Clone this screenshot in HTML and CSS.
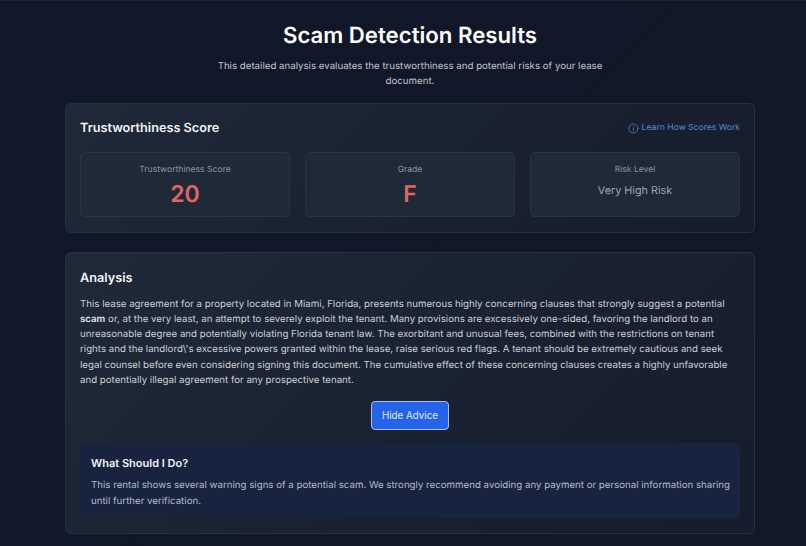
FILE: index.html
```html
<!DOCTYPE html>
<html lang="en">
<head>
    <meta charset="UTF-8">
    <meta name="viewport" content="width=device-width, initial-scale=1.0">
    <title>Scam Detection Results</title>
    <link rel="stylesheet" href="styles.css">
</head>
<body>

<div class="page">
    <div class="page-header">
        <h1 class="title">Scam Detection Results</h1>
        <p class="subtitle">This detailed analysis evaluates the trustworthiness and potential risks of your lease document.</p>
    </div>

    <!-- Score summary -->
    <section class="card score-card">
        <div class="card-head">
            <h2 class="card-title">Trustworthiness Score</h2>
            <a class="learn-link" href="#">
                <svg class="info-icon" viewBox="0 0 24 24" fill="none" stroke="currentColor" stroke-width="1.6" stroke-linecap="round">
                    <circle cx="12" cy="12" r="10"></circle>
                    <path d="M12 11v6"></path>
                    <path d="M12 7.5v.2"></path>
                </svg>
                Learn How Scores Work
            </a>
        </div>
        <div class="stats">
            <div class="stat">
                <div class="stat-label">Trustworthiness Score</div>
                <div class="stat-value">20</div>
            </div>
            <div class="stat">
                <div class="stat-label">Grade</div>
                <div class="stat-value">F</div>
            </div>
            <div class="stat">
                <div class="stat-label">Risk Level</div>
                <div class="stat-text">Very High Risk</div>
            </div>
        </div>
    </section>

    <!-- Analysis -->
    <section class="card analysis-card">
        <h2 class="card-title">Analysis</h2>
        <p class="analysis-text">This lease agreement for a property located in Miami, Florida, presents numerous highly concerning clauses that strongly suggest a potential <strong>scam</strong> or, at the very least, an attempt to severely exploit the tenant. Many provisions are excessively one-sided, favoring the landlord to an unreasonable degree and potentially violating Florida tenant law. The exorbitant and unusual fees, combined with the restrictions on tenant rights and the landlord\'s excessive powers granted within the lease, raise serious red flags. A tenant should be extremely cautious and seek legal counsel before even considering signing this document. The cumulative effect of these concerning clauses creates a highly unfavorable and potentially illegal agreement for any prospective tenant.</p>
        <div class="advice-row">
            <button class="advice-button">Hide Advice</button>
        </div>
        <div class="advice-box">
            <h3 class="advice-title">What Should I Do?</h3>
            <p class="advice-text">This rental shows several warning signs of a potential scam. We strongly recommend avoiding any payment or personal information sharing until further verification.</p>
        </div>
    </section>
</div>

</body>
</html>
```

FILE: styles.css
```css
html, body {
    margin: 0;
    padding: 0;
    height: 100%;
}

body {
    font-family: Inter, "Liberation Sans", sans-serif;
    text-rendering: geometricPrecision;
    background: linear-gradient(135deg, #0f1729 0%, #111827 100%);
    border-top: 1px solid #1c2434;
    box-sizing: border-box;
    overflow: hidden;
}

.page {
    width: 690px;
    margin-left: 65px;
    padding-top: 20px;
}

.page-header {
    text-align: center;
    margin-bottom: 13px;
}

.title {
    margin: 0 0 9px;
    color: #fff;
    font-size: 22.2px;
    line-height: 29px;
    font-weight: 600;
}

.subtitle {
    width: 420px;
    margin: 0 auto;
    color: #c0c4cc;
    font-size: 9.7px;
    line-height: 15.3px;
}

.card {
    box-sizing: border-box;
    padding: 15px 14px;
    border: 1px solid #273040;
    border-radius: 6px;
    background: linear-gradient(135deg, #1f2937 0%, #151c2c 100%);
}

.score-card {
    height: 130px;
    margin-bottom: 19px;
}

.card-head {
    display: flex;
    justify-content: space-between;
    align-items: center;
    margin-bottom: 14px;
}

.card-title {
    margin: 0;
    color: #f3f4f6;
    font-size: 12.7px;
    line-height: 19px;
    font-weight: 600;
}

.learn-link {
    display: flex;
    align-items: center;
    gap: 3px;
    color: #5b86d6;
    font-size: 8.6px;
    text-decoration: none;
}

.info-icon {
    width: 11px;
    height: 11px;
}

.stats {
    display: grid;
    grid-template-columns: repeat(3, 1fr);
    gap: 15px;
}

.stat {
    box-sizing: border-box;
    height: 65px;
    padding-top: 11px;
    border: 1px solid #2a3444;
    border-radius: 5px;
    background: #1f2937;
    text-align: center;
}

.stat-label {
    color: #8d95a2;
    font-size: 8.6px;
    line-height: 13px;
}

.stat-value {
    margin-top: 3px;
    color: #e06666;
    font-size: 23px;
    line-height: 28px;
    font-weight: 600;
}

.stat-text {
    margin-top: 5px;
    color: #9ca3af;
    font-size: 10.8px;
    line-height: 17px;
}

.analysis-card {
    height: 282px;
    padding-top: 16px;
}

.analysis-text {
    margin: 9px 0 0;
    color: #cbcfd6;
    font-size: 9.7px;
    line-height: 15.3px;
}

.analysis-text strong {
    color: #e5e7eb;
    font-weight: 600;
}

.advice-row {
    display: flex;
    justify-content: center;
    margin-top: 13px;
}

.advice-button {
    box-sizing: border-box;
    width: 78px;
    height: 29px;
    padding: 0;
    border: 1px solid #a9bfe8;
    border-radius: 4px;
    background: #2563eb;
    color: #e3eafa;
    font-family: inherit;
    font-size: 9.8px;
}

.advice-box {
    box-sizing: border-box;
    height: 75px;
    margin-top: 13px;
    padding: 12px 8px 12px 11px;
    border-radius: 3px;
    background: #18233f;
}

.advice-title {
    margin: 0 0 6px;
    color: #f3f4f6;
    font-size: 11px;
    line-height: 17px;
    font-weight: 600;
}

.advice-text {
    margin: 0;
    color: #b3bac8;
    font-size: 9.7px;
    line-height: 15.3px;
}
```
